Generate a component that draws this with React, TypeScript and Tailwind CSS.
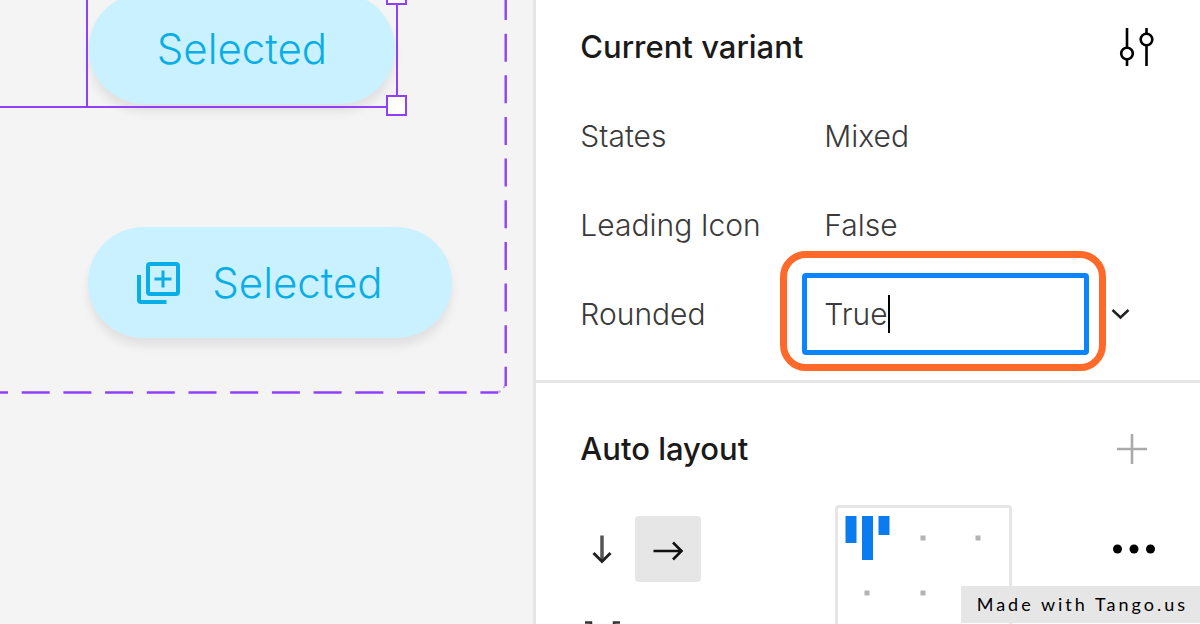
import type { ReactNode } from "react";

function AddVariantIcon() {
  return (
    <svg width="44" height="44" viewBox="0 0 44 44" fill="none" stroke="#0aaee6" strokeWidth="4" aria-hidden="true">
      <rect x="12" y="3" width="30" height="30" rx="2" />
      <path d="M3 14v25a2 2 0 0 0 2 2H30.500" />
      <path d="M27 9.500v17M18.500 18h17" strokeWidth="3" />
    </svg>
  );
}

function Pill({ className, children }: { className: string; children: ReactNode }) {
  return (
    <button
      type="button"
      className={`absolute flex h-[111px] items-center justify-center rounded-full bg-[#caf1ff] text-[42px] font-[350] text-[#0aaee6] shadow-[0_8px_10px_rgba(0,0,0,0.08)] ${className}`}
    >
      {children}
    </button>
  );
}

function Canvas() {
  return (
    <main className="relative overflow-hidden bg-[#f4f4f4]">
      <Pill className="-top-[7px] left-[89px] w-[306px]">Selected</Pill>
      <Pill className="top-[227px] left-[88px] w-[364px] gap-8 pr-[21px]">
        <AddVariantIcon />
        Selected
      </Pill>

      <svg className="absolute top-0 left-0" width="520" height="400" fill="none" stroke="#8f40ff" strokeWidth="2.4" aria-hidden="true">
        <path d="M505.700 -8V386" strokeDasharray="28 13.65" />
        <path d="M-20 392.5H498" strokeDasharray="28 13.7" />
        <path d="M505.700 384.500L503.500 388M500.500 391L497.500 392.500" strokeWidth="2" opacity=".45" />
      </svg>

      <div className="absolute -top-4 -left-4 h-[124px] w-[414px] border-r-2 border-b-2 border-[#8f40ff]" />
      <div className="absolute top-0 left-[86px] h-[106px] w-0.5 bg-[#8f40ff]" />
      <div className="absolute -top-4 left-[386px] size-[21px] border-2 border-[#8f40ff] bg-white" />
      <div className="absolute top-[95px] left-[386px] size-[21px] border-2 border-[#8f40ff] bg-white" />
    </main>
  );
}

function SectionHeader({ title, children }: { title: string; children: ReactNode }) {
  return (
    <div className="flex h-[89px] items-center justify-between">
      <h2 className="text-[31px] font-medium text-[#1a1a1a]">{title}</h2>
      {children}
    </div>
  );
}

function PropertyRow({ label, value }: { label: string; value: string }) {
  return (
    <div className="flex h-[89px] items-center">
      <dt className="w-[222px] shrink-0">{label}</dt>
      <dd className="pl-[22px]">{value}</dd>
    </div>
  );
}

function CurrentVariant() {
  return (
    <section className="border-b-[3px] border-[#e6e6e6] pt-0.5 pr-11 pb-[22px] pl-11">
      <SectionHeader title="Current variant">
        <button type="button" aria-label="Variant settings">
          <svg width="38" height="40" viewBox="0 0 38 40" fill="none" stroke="#000" strokeWidth="2.600" aria-hidden="true">
            <path d="M9 1v19.500M9 32.500V39M28.500 1v5.500M28.500 18.500V39" />
            <circle cx="9" cy="26.500" r="5.800" />
            <circle cx="28.500" cy="12.500" r="5.800" />
          </svg>
        </button>
      </SectionHeader>
      <dl>
        <PropertyRow label="States" value="Mixed" />
        <PropertyRow label="Leading Icon" value="False" />
      </dl>
      <div className="flex h-[89px] items-center">
        <label htmlFor="rounded" className="w-[222px] shrink-0">
          Rounded
        </label>
        <div className="relative w-[287px]">
          <input
            id="rounded"
            defaultValue="True"
            className="block h-[82px] w-full rounded-[4px] border-[5px] border-[#0a85ff] bg-white pl-[17px] outline-none"
          />
          <span className="absolute top-[22px] left-[86px] h-[38px] w-0.5 bg-black" />
          <span className="pointer-events-none absolute -top-[22px] -right-[17px] -bottom-4 -left-[22px] rounded-[26px] border-[7px] border-[#ff6a2b]" />
        </div>
        <button type="button" aria-label="Show values" className="ml-[22px]">
          <svg width="20" height="12" viewBox="0 0 20 12" fill="none" stroke="#222" strokeWidth="2.500" aria-hidden="true">
            <path d="M1.500 2L9.500 9.500L17.500 2" />
          </svg>
        </button>
      </div>
    </section>
  );
}

const alignmentDots = [
  [88, 33],
  [143, 33],
  [32, 88],
  [88, 88],
  [143, 88],
];

function AutoLayout() {
  return (
    <section className="pt-[21px] pr-11 pl-11">
      <SectionHeader title="Auto layout">
        <button type="button" aria-label="Add auto layout" className="mr-2">
          <svg width="32" height="32" viewBox="0 0 32 32" fill="none" stroke="#aaa" strokeWidth="2.600" aria-hidden="true">
            <path d="M16 1v30M1 16h30" />
          </svg>
        </button>
      </SectionHeader>
      <div className="flex items-start pt-3">
        <div className="w-[255px] shrink-0 pt-[11px]">
          <div className="flex">
            <button type="button" aria-label="Vertical" className="grid h-[66px] w-[55px] place-items-center pr-3">
              <svg width="20" height="30" viewBox="0 0 20 30" fill="none" stroke="#222" strokeWidth="2.600" aria-hidden="true">
                <path d="M10 1.500V27" strokeWidth="3.500" stroke="#555" />
                <path d="M1.500 19L10 27.500L18.500 19" strokeWidth="3" />
              </svg>
            </button>
            <button type="button" aria-label="Horizontal" className="grid size-[66px] place-items-center rounded-[4px] bg-[#e6e6e6] pt-1">
              <svg width="32" height="20" viewBox="0 0 32 20" fill="none" stroke="#111" strokeWidth="2.600" aria-hidden="true">
                <path d="M1.500 10H29M21 1.500L29.500 10L21 18.500" />
              </svg>
            </button>
          </div>
          <svg className="mt-[39px] ml-1" width="38" height="30" viewBox="0 0 38 30" fill="none" stroke="#333" strokeWidth="2.500" aria-hidden="true">
            <path d="M1 1.500h6v27H1M36 1.500h-6v27h6" />
          </svg>
        </div>
        <button type="button" aria-label="Alignment" className="shrink-0 rounded-[4px] border-[3px] border-[#e6e6e6]">
          <svg width="171" height="171" viewBox="3 3 171 171" aria-hidden="true">
            <g fill="#0a7cf0">
              <rect x="10.500" y="11" width="11" height="27" />
              <rect x="27" y="11" width="11" height="44" />
              <rect x="43.500" y="11" width="11" height="19" />
            </g>
            <g fill="#b3b3b3">
              {alignmentDots.map(([x, y]) => (
                <rect key={`${x}-${y}`} x={x - 2.5} y={y - 2.5} width="5" height="5" />
              ))}
            </g>
          </svg>
        </button>
        <button type="button" aria-label="More options" className="mt-[39px] ml-auto">
          <svg width="44" height="10" viewBox="0 0 44 10" aria-hidden="true">
            <circle cx="5.500" cy="5" r="4.500" />
            <circle cx="22" cy="5" r="4.500" />
            <circle cx="38.500" cy="5" r="4.500" />
          </svg>
        </button>
      </div>
    </section>
  );
}

export default function App() {
  return (
    <div className="relative grid h-screen grid-cols-[4fr_5fr] overflow-hidden font-['Inter',sans-serif]">
      <Canvas />
      <aside className="overflow-hidden border-l-[3px] border-[#e6e6e6] bg-white text-[30px] leading-10 font-[350] text-[#3a3a3a]">
        <CurrentVariant />
        <AutoLayout />
      </aside>
      <footer className="absolute right-0 bottom-px bg-[#e6e6e6] py-1.5 pr-3 pl-4 font-['Lato',sans-serif] text-lg leading-[25px] tracking-[3px] text-black">
        Made with Tango.us
      </footer>
    </div>
  );
}
